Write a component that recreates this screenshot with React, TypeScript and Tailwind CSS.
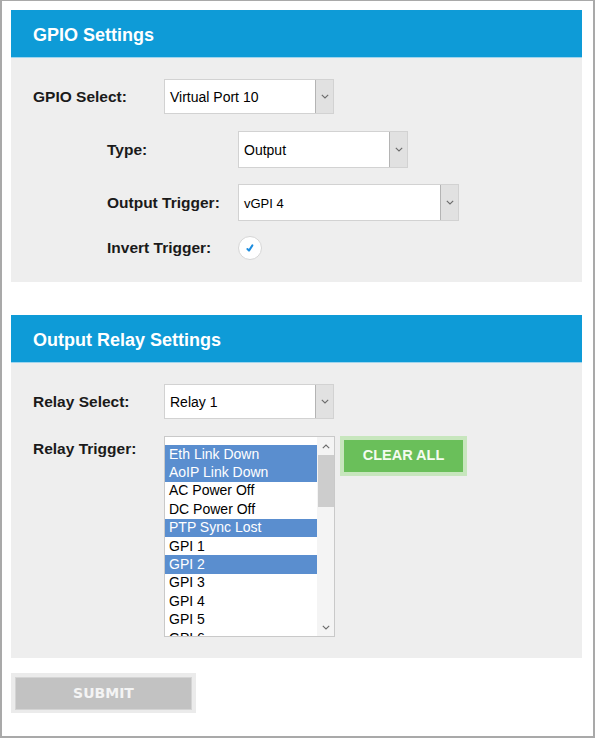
import React from 'react';

const labelCls = "font-['Liberation_Sans',Arial,sans-serif] font-bold text-[15.5px] text-[#1a1a1a] w-[131px] shrink-0";

const Chevron = ({ up = false }: { up?: boolean }) => (
    <svg width="8" height="5" viewBox="0 0 8 5" className={up ? 'rotate-180' : ''}>
        <path d="M0.8 0.8 L4 4 L7.2 0.8" fill="none" stroke="#6b6b6b" strokeWidth="1.1" />
    </svg>
);

interface SelectBoxProps {
    value: string;
    width: string;
    height: string;
    small?: boolean;
}

// fake dropdown, looks like the old IE style select
const SelectBox: React.FC<SelectBoxProps> = ({ value, width, height, small }) => (
    <div className={`flex bg-white border border-[#d2d2d2] ${width} ${height}`}>
        <span
            className={`flex-1 flex items-center pl-[5px] pt-[2px] text-black font-['Liberation_Sans',Arial,sans-serif] ${small ? 'text-[13px]' : 'text-[14px]'}`}
        >
            {value}
        </span>
        <div className="w-[18px] bg-[#e1e1e1] border-l border-[#b4b4b4] flex items-center justify-center">
            <Chevron />
        </div>
    </div>
);

const PanelHeader = ({ title }: { title: string }) => (
    <div className="h-[48px] bg-[#0e9bd7] border-b border-[#9fd5ee] flex items-center pl-[22px] pt-[3px]">
        <span className="font-['Liberation_Sans',Arial,sans-serif] font-bold text-[18px] text-white">{title}</span>
    </div>
);

const triggers = [
    { name: 'Eth Link Down', selected: true },
    { name: 'AoIP Link Down', selected: true },
    { name: 'AC Power Off', selected: false },
    { name: 'DC Power Off', selected: false },
    { name: 'PTP Sync Lost', selected: true },
    { name: 'GPI 1', selected: false },
    { name: 'GPI 2', selected: true },
    { name: 'GPI 3', selected: false },
    { name: 'GPI 4', selected: false },
    { name: 'GPI 5', selected: false },
    { name: 'GPI 6', selected: false },
];

export default function App() {
    return (
        <div className="w-[595px] h-[738px] bg-white border-[#a9a9a9] border-l-2 border-r-2 border-b-2 border-t pt-[9px] pl-[9px]">
            {/* GPIO Settings */}
            <div className="w-[571px]">
                <PanelHeader title="GPIO Settings" />
                <div className="bg-[#eeeeee] h-[224px] pl-[22px] pt-[21px]">
                    <div className="flex items-center">
                        <span className={labelCls}>GPIO Select:</span>
                        <SelectBox value="Virtual Port 10" width="w-[170px]" height="h-[35px]" />
                    </div>
                    <div className="pl-[74px]">
                        <div className="flex items-center mt-[17px]">
                            <span className={labelCls}>Type:</span>
                            <SelectBox value="Output" width="w-[170px]" height="h-[37px]" />
                        </div>
                        <div className="flex items-center mt-[16px]">
                            <span className={labelCls}>Output Trigger:</span>
                            <SelectBox value="vGPI 4" width="w-[221px]" height="h-[37px]" small />
                        </div>
                        <div className="flex items-center mt-[15px]">
                            <span className={labelCls}>Invert Trigger:</span>
                            <div className="w-[24px] h-[24px] rounded-full bg-white border border-[#d6d6d6] flex items-center justify-center">
                                <svg width="12" height="12" viewBox="0 0 12 12">
                                    <path d="M3.4 7 L5 8.6 L8.4 3.4" fill="none" stroke="#1c8ddf" strokeWidth="2" strokeLinecap="round" strokeLinejoin="round" />
                                </svg>
                            </div>
                        </div>
                    </div>
                </div>
            </div>

            {/* Output Relay Settings */}
            <div className="w-[571px] mt-[33px]">
                <PanelHeader title="Output Relay Settings" />
                <div className="bg-[#eeeeee] h-[295px] pl-[22px] pt-[21px]">
                    <div className="flex items-center">
                        <span className={labelCls}>Relay Select:</span>
                        <SelectBox value="Relay 1" width="w-[170px]" height="h-[35px]" />
                    </div>
                    <div className="flex items-start mt-[17px]">
                        <span className={`${labelCls} pt-[1px]`}>Relay Trigger:</span>
                        <div className="w-[171px] h-[201px] bg-white border border-[#c9c9c9] flex overflow-hidden">
                            <div className="flex-1 overflow-hidden pt-[8px]">
                                {triggers.map((t) => (
                                    <div
                                        key={t.name}
                                        className={`h-[18.4px] flex items-center pl-[4px] text-[14px] font-['Liberation_Sans',Arial,sans-serif] ${t.selected ? 'bg-[#5a8ecf] text-white' : 'text-black'}`}
                                    >
                                        {t.name}
                                    </div>
                                ))}
                            </div>
                            <div className="w-[17px] bg-[#f4f4f4] flex flex-col items-center">
                                <div className="h-[18px] flex items-center justify-center">
                                    <Chevron up />
                                </div>
                                <div className="w-[16px] h-[52px] bg-[#cdcdcd]" />
                                <div className="flex-1" />
                                <div className="h-[18px] flex items-center justify-center">
                                    <Chevron />
                                </div>
                            </div>
                        </div>
                        <div className="ml-[5px] bg-[#c7e6bd] p-[4px]">
                            <button className="w-[119px] h-[32px] bg-[#6abf5a] flex items-center justify-center font-['Liberation_Sans',Arial,sans-serif] font-bold text-[14.5px] text-[#f4fbef]">
                                CLEAR ALL
                            </button>
                        </div>
                    </div>
                </div>
            </div>

            {/* Submit */}
            <div className="mt-[15px] w-[185px] h-[40px] bg-[#ebebeb] pt-[4px] px-[4px]">
                <button className="w-full h-[33px] bg-[#c2c2c2] border border-[#d4d4d4] flex items-center justify-center font-['DejaVu_Sans',Verdana,sans-serif] font-bold text-[14px] text-[#f4f4f4]">
                    SUBMIT
                </button>
            </div>
        </div>
    );
}
